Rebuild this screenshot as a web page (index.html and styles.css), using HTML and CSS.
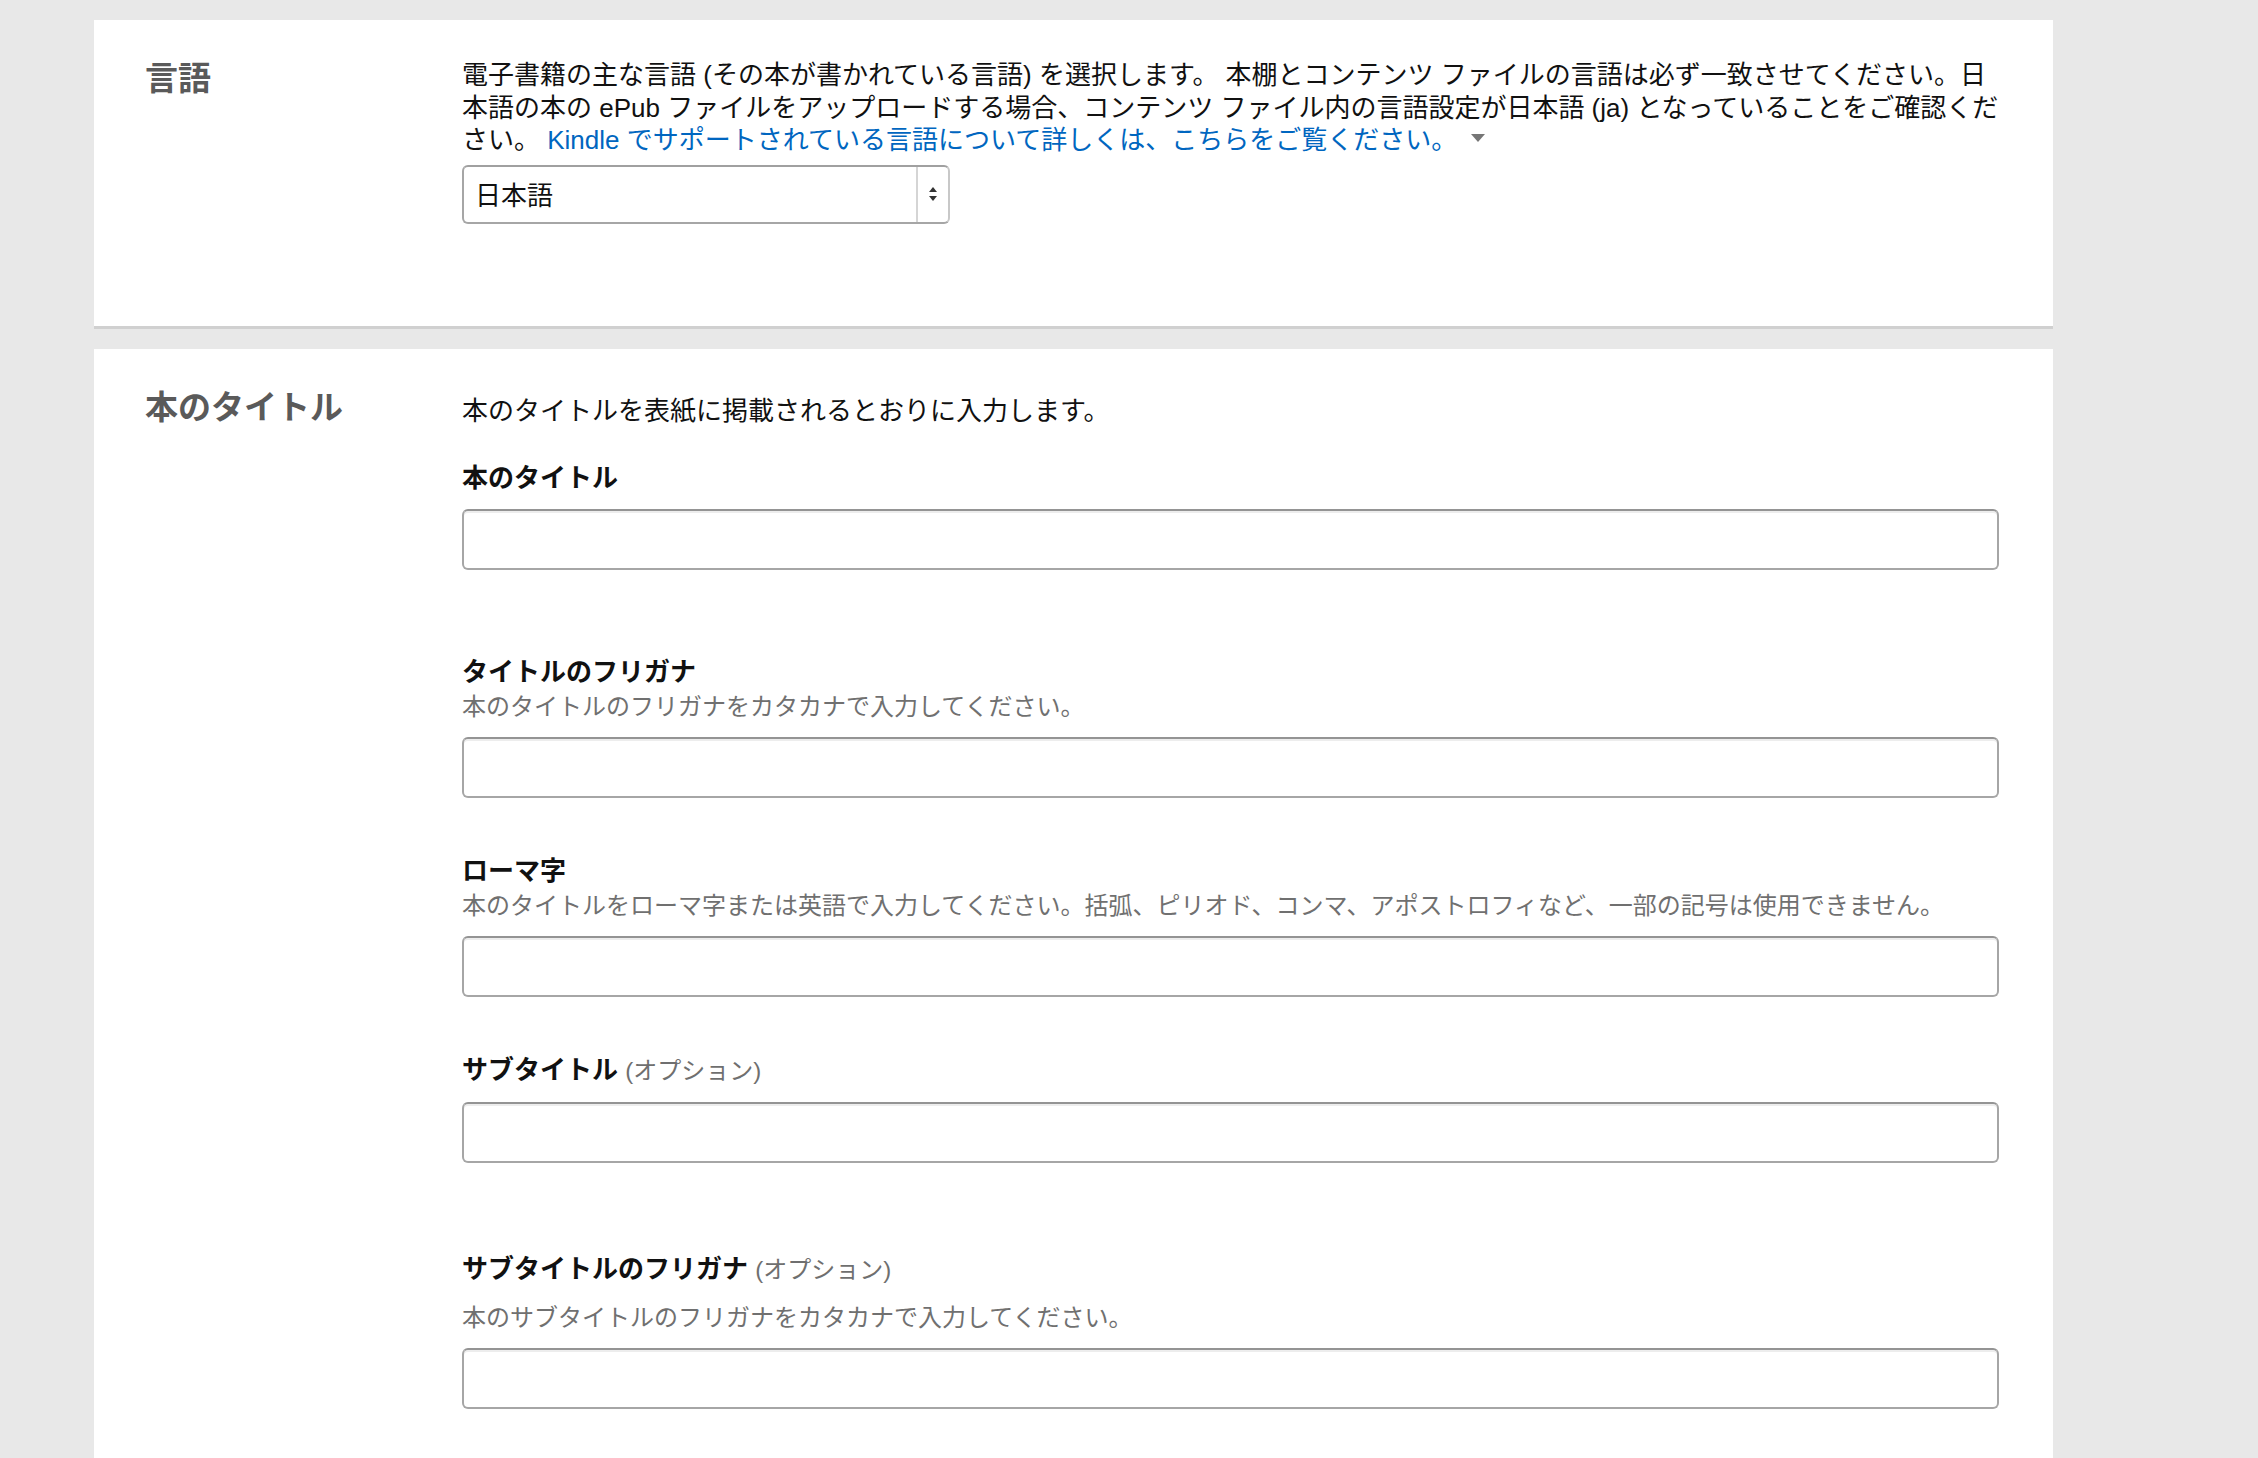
FILE: index.html
```html
<!DOCTYPE html>
<html lang="ja">
<head>
    <meta charset="UTF-8">
    <title>電子書籍の詳細</title>
    <link rel="stylesheet" href="styles.css">
</head>
<body>
    <div class="page">

        <!-- 言語 -->
        <section class="section section-language">
            <h2 class="section-title">言語</h2>
            <div class="section-body">
                <p class="section-desc">
                    電子書籍の主な言語 (その本が書かれている言語) を選択します。 本棚とコンテンツ ファイルの言語は必ず一致させてください。日本語の本の ePub ファイルをアップロードする場合、コンテンツ ファイル内の言語設定が日本語 (ja) となっていることをご確認ください。
                    <a href="#" class="help-link">Kindle でサポートされている言語について詳しくは、こちらをご覧ください。</a><span class="caret"></span>
                </p>
                <div class="select-box">
                    <span class="select-value">日本語</span>
                    <span class="select-arrows">
                        <svg width="10" height="16" viewBox="0 0 10 16">
                            <path d="M5 1 L9 6 L1 6 Z" fill="#333"/>
                            <path d="M5 15 L9 10 L1 10 Z" fill="#333"/>
                        </svg>
                    </span>
                </div>
            </div>
        </section>

        <!-- 本のタイトル -->
        <section class="section section-title-block">
            <h2 class="section-title">本のタイトル</h2>
            <div class="section-body">
                <p class="section-desc">本のタイトルを表紙に掲載されるとおりに入力します。</p>

                <div class="field field-first">
                    <label class="field-label">本のタイトル</label>
                    <input type="text" class="text-input">
                </div>

                <div class="field field-wide">
                    <label class="field-label">タイトルのフリガナ</label>
                    <p class="field-hint">本のタイトルのフリガナをカタカナで入力してください。</p>
                    <input type="text" class="text-input">
                </div>

                <div class="field">
                    <label class="field-label">ローマ字</label>
                    <p class="field-hint">本のタイトルをローマ字または英語で入力してください。括弧、ピリオド、コンマ、アポストロフィなど、一部の記号は使用できません。</p>
                    <input type="text" class="text-input">
                </div>

                <div class="field">
                    <label class="field-label">サブタイトル <span class="optional">(オプション)</span></label>
                    <input type="text" class="text-input">
                </div>

                <div class="field field-last">
                    <label class="field-label">サブタイトルのフリガナ <span class="optional">(オプション)</span></label>
                    <p class="field-hint hint-loose">本のサブタイトルのフリガナをカタカナで入力してください。</p>
                    <input type="text" class="text-input">
                </div>
            </div>
        </section>

    </div>
</body>
</html>
```

FILE: styles.css
```css
* {
    margin: 0;
    padding: 0;
    box-sizing: border-box;
}

body {
    background-color: #e8e8e8;
    font-family: 'Liberation Sans', 'Noto Sans CJK JP', sans-serif;
    color: #111;
    height: 1458px;
    overflow: hidden;
}

.page {
    width: 1959px;
    margin-left: 94px;
    padding-top: 20px;
}

.section {
    display: grid;
    grid-template-columns: 317px 1fr;
    background-color: #fff;
    padding: 0 54px 0 51px;
}

.section-language {
    padding-top: 39px;
    padding-bottom: 102px;
    border-bottom: 3px solid #d0d0d0;
    margin-bottom: 20px;
}

.section-title-block {
    padding-top: 46px;
    padding-bottom: 60px;
}

.section-title {
    font-size: 33px;
    line-height: 40px;
    font-weight: 700;
    color: #5a5a5a;
}

.section-language .section-title {
    margin-top: 0;
}

.section-title-block .section-title {
    margin-top: -7px;
}

.section-desc {
    font-size: 26px;
    line-height: 32.5px;
    color: #111;
}

.help-link {
    color: #0066c0;
    text-decoration: none;
}

.caret {
    display: inline-block;
    margin-left: 14px;
    width: 0;
    height: 0;
    border-left: 7px solid transparent;
    border-right: 7px solid transparent;
    border-top: 8px solid #767676;
    vertical-align: 7px;
}

/* select */
.select-box {
    display: flex;
    width: 488px;
    height: 59px;
    margin-top: 8px;
    border: 2px solid #c8c8c8;
    border-left-color: #a6a6a6;
    border-top-color: #a0a0a0;
    border-bottom-color: #a6a6a6;
    border-radius: 6px;
    background-color: #fff;
}

.select-value {
    flex: 1;
    display: flex;
    align-items: center;
    padding-left: 11px;
    padding-bottom: 2px;
    font-size: 26px;
    border-right: 2px solid #d5d5d5;
}

.select-arrows {
    width: 30px;
    display: flex;
    align-items: center;
    justify-content: center;
}

/* fields */
.field {
    margin-top: 56px;
}

.field-first {
    margin-top: 34px;
}

.field-wide {
    margin-top: 85px;
}

.field-last {
    margin-top: 89px;
}

.field-label {
    display: block;
    font-size: 26px;
    line-height: 34px;
    font-weight: 700;
    color: #111;
}

.optional {
    font-weight: 400;
    font-size: 24px;
    color: #6f6f6f;
}

.field-hint {
    font-size: 24px;
    line-height: 32px;
    color: #707070;
    margin-top: 2px;
}

.hint-loose {
    margin-top: 15px;
}

.text-input {
    display: block;
    width: 100%;
    height: 61px;
    margin-top: 14px;
    border: 2px solid #a6a6a6;
    border-top-color: #949494;
    border-radius: 6px;
    box-shadow: inset 0 2px 0 rgba(0, 0, 0, 0.07);
    background-color: #fff;
    font-size: 26px;
    padding: 0 14px;
    outline: none;
}
```
